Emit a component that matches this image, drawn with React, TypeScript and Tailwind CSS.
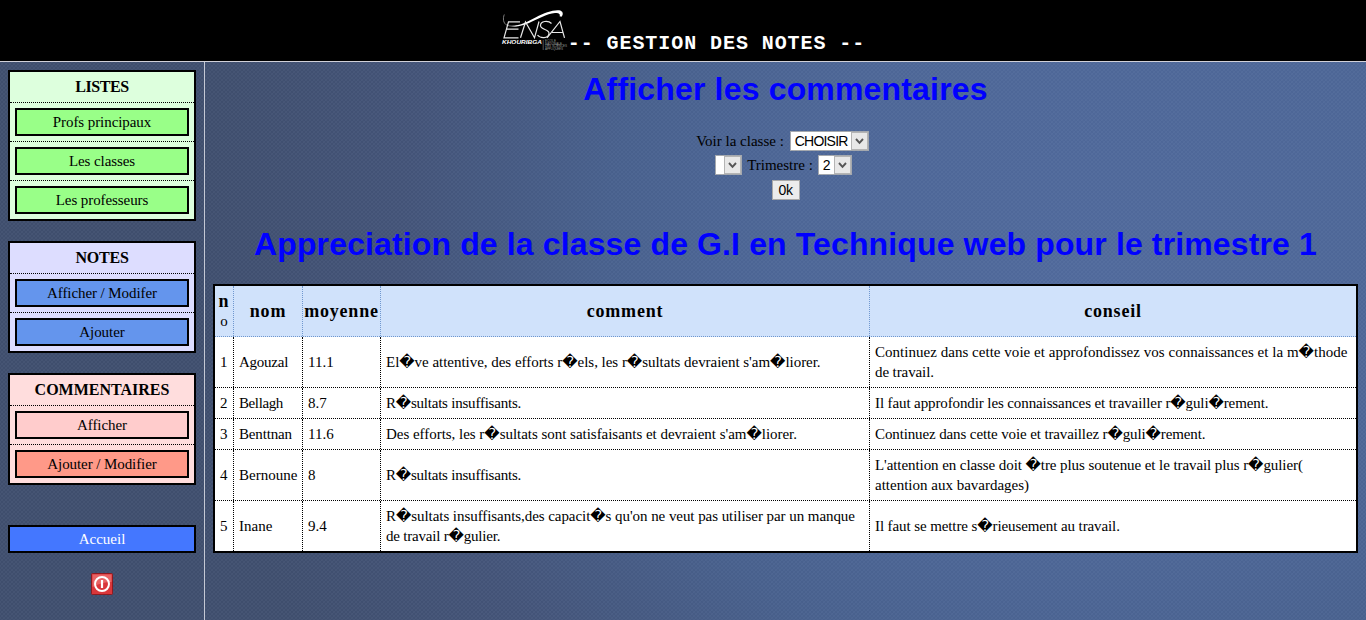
import type { ReactNode } from "react";

const serif = "font-['Liberation_Serif','DejaVu_Sans',serif]";
const sans = "font-['Liberation_Sans',sans-serif]";

function EnsaLogo() {
  return (
    <svg width="68" height="42" viewBox="0 0 68 42" className="block">
      <path d="M3.3 5.5 C1.8 9 2 14.5 6 16.2 C9 17.4 13 17.2 16 16.8" fill="none" stroke="#9a9a9a" strokeWidth="0.8" />
      <path d="M10 17 C20 16.5 27 12.5 35 8.2 C43 3.8 52 0.6 58 1.2 C62 1.8 62.8 5 60.5 7.8 L58.6 7.2 C59.6 5.2 58 3.8 54 4 C46 4.6 36 10.5 28 14 C21 17 15 18 10 17Z" fill="#fff" />
      <g fill="none" stroke="#e8e8e8" strokeWidth="1.2">
        <path d="M19 12.8 H7.5 L3 28.8 H17.5 M5.5 20.2 H17.5" />
        <path d="M19.5 28.8 L24.5 13 L33.5 28.8 L38 12.5" />
        <path d="M50.5 14.5 C47 11 39.5 12 39.5 16.5 C39.5 21 48.5 20 48 24.5 C47.5 29.8 39 29.5 36.5 26" />
        <path d="M46 28.8 L59 12.5 L63.5 28.8 M51 23.5 H61.5" />
      </g>
      <text x="1" y="34.8" fill="#fff" fontSize="5.6" fontWeight="bold" fontStyle="italic" fontFamily="Liberation Sans" textLength="40" lengthAdjust="spacingAndGlyphs">KHOURIBGA</text>
      <path d="M42.2 31 V41" stroke="#777" strokeWidth="0.7" />
      <g fill="#999" fontSize="3" fontFamily="Liberation Sans">
        <text x="44" y="33.2" textLength="11">ECOLE</text>
        <text x="44" y="35.8" textLength="17">NATIONALE</text>
        <text x="44" y="38.4" textLength="22">DES SCIENCES</text>
        <text x="44" y="41" textLength="18">APPLIQUEES</text>
      </g>
    </svg>
  );
}

function MenuBox({ title, titleTracking = "", tone, items }: { title: string; titleTracking?: string; tone: string; items: { label: string; tone: string }[] }) {
  return (
    <nav className={`border-2 border-black ${tone}`}>
      <h2 className={`h-[30px] text-center text-[16px] leading-[30px] font-bold ${titleTracking}`}>{title}</h2>
      {items.map((item) => (
        <div key={item.label} className="border-t border-dotted border-black p-[5px]">
          <a className={`block h-7 border-2 border-black text-center text-[15px] leading-6 tracking-[-0.08px] ${item.tone}`}>{item.label}</a>
        </div>
      ))}
    </nav>
  );
}

function Select({ value, size }: { value: string; size: string }) {
  return (
    <span className={`flex h-5 border border-[#a4a8ae] bg-white text-black ${size}`}>
      <span className={`min-w-0 flex-1 pl-1 text-[14px] leading-[18px] tracking-[-0.8px] ${sans}`}>{value}</span>
      <span className="flex w-[17px] shrink-0 items-center justify-center border border-[#b4b4b4] bg-[#e8e8e8]">
        <svg width="9" height="7" viewBox="0 0 9 7">
          <path d="M1 1 L4.5 4.8 L8 1" fill="none" stroke="#555" strokeWidth="1.9" />
        </svg>
      </span>
    </span>
  );
}

type Row = { n: number; nom: ReactNode; moyenne: string; comment: ReactNode; conseil: ReactNode; size: string };

const rows: Row[] = [
  {
    n: 1,
    nom: <span className="tracking-[-0.25px]">Agouzal</span>,
    moyenne: "11.1",
    comment: <p className="tracking-[-0.03px]">{"El\uFFFDve attentive, des efforts r\uFFFDels, les r\uFFFDsultats devraient s'am\uFFFDliorer."}</p>,
    conseil: <><p className="tracking-[0.03px]">{"Continuez dans cette voie et approfondissez vos connaissances et la m\uFFFDthode"}</p><p className="tracking-[-0.1px]">de travail.</p></>,
    size: "h-[51px]",
  },
  {
    n: 2,
    nom: <span className="tracking-[-0.4px]">Bellagh</span>,
    moyenne: "8.7",
    comment: <p className="tracking-[-0.22px]">{"R\uFFFDsultats insuffisants."}</p>,
    conseil: <p className="tracking-[-0.11px]">{"Il faut approfondir les connaissances et travailler r\uFFFDguli\uFFFDrement."}</p>,
    size: "h-[31px]",
  },
  {
    n: 3,
    nom: <span className="tracking-[-0.15px]">Benttnan</span>,
    moyenne: "11.6",
    comment: <p className="tracking-[-0.03px]">{"Des efforts, les r\uFFFDsultats sont satisfaisants et devraient s'am\uFFFDliorer."}</p>,
    conseil: <p className="tracking-[-0.12px]">{"Continuez dans cette voie et travaillez r\uFFFDguli\uFFFDrement."}</p>,
    size: "h-[31px]",
  },
  {
    n: 4,
    nom: "Bernoune",
    moyenne: "8",
    comment: <p className="tracking-[-0.22px]">{"R\uFFFDsultats insuffisants."}</p>,
    conseil: <><p className="tracking-[-0.08px]">{"L'attention en classe doit \uFFFDtre plus soutenue et le travail plus r\uFFFDgulier("}</p><p>attention aux bavardages)</p></>,
    size: "h-[51px]",
  },
  {
    n: 5,
    nom: "Inane",
    moyenne: "9.4",
    comment: <><p className="tracking-[-0.06px]">{"R\uFFFDsultats insuffisants,des capacit\uFFFDs qu'on ne veut pas utiliser par un manque"}</p><p className="tracking-[-0.2px]">{"de travail r\uFFFDgulier."}</p></>,
    conseil: <p className="tracking-[-0.1px]">{"Il faut se mettre s\uFFFDrieusement au travail."}</p>,
    size: "h-[51px]",
  },
];

const columns = "grid grid-cols-[19px_69px_78px_489px_486px]";
const cell = "flex items-center border-r border-dotted border-black pl-[5px] whitespace-nowrap";
const headCell = "flex items-center justify-center border-r border-dotted border-[#6f97cf]";

export default function App() {
  return (
    <div className={`flex h-[620px] w-[1366px] flex-col overflow-hidden text-black ${serif}`}>
      <header className="flex h-[62px] justify-center border-b border-[#d0d0d8] bg-black">
        <div className="w-[67px] pt-[9px]"><EnsaLogo /></div>
        <h1 className="pt-8 text-[20px] leading-6 font-bold tracking-[0.93px] whitespace-pre text-white font-['Liberation_Mono',monospace]">-- GESTION DES NOTES --</h1>
      </header>
      <div className="flex flex-1 bg-[radial-gradient(circle_at_center,rgba(190,215,255,0.07)_0.5px,transparent_1.2px),radial-gradient(circle_at_center,rgba(190,215,255,0.07)_0.5px,transparent_1.2px),radial-gradient(ellipse_900px_800px_at_1100px_200px,#50699b_0%,#4d6696_35%,#48608c_55%,#435377_78%,#3f4e6d_100%)] bg-[size:4px_4px,4px_4px,100%_100%] bg-[position:0_0,2px_2px,0_0]">
        <aside className="flex w-[205px] flex-col border-r border-[#c4c8d4] px-2 pt-2">
          <div className="flex flex-col gap-5">
            <MenuBox title="LISTES" titleTracking="tracking-[-0.4px]" tone="bg-[#ddffdd]" items={[
              { label: "Profs principaux", tone: "bg-[#99ff88]" },
              { label: "Les classes", tone: "bg-[#99ff88]" },
              { label: "Les professeurs", tone: "bg-[#99ff88]" },
            ]} />
            <MenuBox title="NOTES" titleTracking="tracking-[-0.2px]" tone="bg-[#ddddff]" items={[
              { label: "Afficher / Modifer", tone: "bg-[#6495ed]" },
              { label: "Ajouter", tone: "bg-[#6495ed]" },
            ]} />
            <MenuBox title="COMMENTAIRES" tone="bg-[#ffdddd]" items={[
              { label: "Afficher", tone: "bg-[#ffcccc]" },
              { label: "Ajouter / Modifier", tone: "bg-[#ff9988]" },
            ]} />
          </div>
          <a className="mt-10 block h-7 border-2 border-black bg-[#4477ff] text-center text-[15px] leading-6 text-white">Accueil</a>
          <svg width="22" height="22" viewBox="0 0 22 22" className="mt-5 self-center">
            <rect x="0.5" y="0.5" width="21" height="21" rx="1" fill="#d9373b" stroke="#8e1a20" />
            <path d="M1.5 1.5 H20.5 V9 Q11 9 1.5 14Z" fill="#ee7777" opacity="0.7" />
            <circle cx="11" cy="11" r="7" fill="none" stroke="#fff" strokeWidth="2" />
            <path d="M11 7 V15" stroke="#fff" strokeWidth="2.2" />
          </svg>
        </aside>
        <main className="flex-1 px-2 pt-[7px]">
          <h2 className={`text-center text-[32px] leading-10 font-bold tracking-[0.17px] whitespace-nowrap text-[#0000ff] ${sans}`}>Afficher les commentaires</h2>
          <form className="mt-[22px] flex flex-col items-center text-[15px] leading-5">
            <div className="mr-[6px] flex h-6 gap-[6px]"><span>Voir la classe :</span><Select value="CHOISIR" size="w-[79px]" /></div>
            <div className="mr-[4px] flex h-[25px] gap-[5px]"><Select value="" size="w-[27px]" /><span>Trimestre :</span><Select value="2" size="w-[34px]" /></div>
            <button type="button" className={`h-5 w-7 border border-[#a9a9a9] bg-[#ececec] text-[14px] leading-[18px] tracking-[-0.4px] ${sans}`}>0k</button>
          </form>
          <h2 className={`mt-6 text-center text-[32px] leading-10 font-bold tracking-[0.13px] whitespace-nowrap text-[#0000ff] ${sans}`}>Appreciation de la classe de G.I en Technique web pour le trimestre 1</h2>
          <div className="mt-5 w-[1145px] border-2 border-black bg-white text-[15px] leading-5">
            <div className={`h-[51px] border-b border-dotted border-[#6f97cf] bg-[#d0e2fb] text-center text-[18px] font-bold tracking-[0.8px] ${columns}`}>
              <div className={`flex-col ${headCell}`}><span className="h-[18px] leading-[18px]">n</span><span className="h-5 text-[15px] leading-[22px] font-normal tracking-normal">o</span></div>
              <div className={headCell}>nom</div>
              <div className={headCell}>moyenne</div>
              <div className={headCell}>comment</div>
              <div className="flex items-center justify-center">conseil</div>
            </div>
            {rows.map((r) => (
              <div key={r.n} className={`border-b border-dotted border-black last:h-[50px] last:border-b-0 ${columns} ${r.size}`}>
                <div className={cell}>{r.n}</div>
                <div className={cell}>{r.nom}</div>
                <div className={cell}>{r.moyenne}</div>
                <div className={cell}><div>{r.comment}</div></div>
                <div className="flex items-center pl-[5px] whitespace-nowrap"><div>{r.conseil}</div></div>
              </div>
            ))}
          </div>
        </main>
      </div>
    </div>
  );
}
